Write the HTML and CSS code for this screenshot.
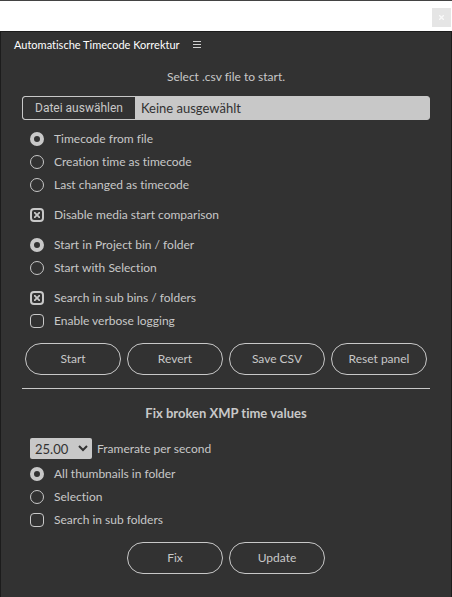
FILE: index.html
```
<!DOCTYPE html>
<html lang="de">
<head>
<meta charset="utf-8">
<title>Automatische Timecode Korrektur</title>
<link rel="stylesheet" href="styles.css">
</head>
<body>
<div class="titlebar">
  <button class="close" type="button" aria-label="Close"><svg width="5" height="5" viewBox="0 0 5 5"><path d="M0 0L5 5M5 0L0 5"/></svg></button>
</div>
<main class="panel">
  <header class="head">
    <h1 class="title">Automatische Timecode Korrektur</h1>
    <button class="menu" type="button" aria-label="Panel menu"><svg width="8" height="7" viewBox="0 0 8 7"><path d="M0 .5H8M0 3.5H8M0 6.5H8"/></svg></button>
  </header>
  <form class="content">
    <p class="hint">Select .csv file to start.</p>
    <label class="file">
      <input class="file-input" type="file" accept=".csv">
      <span class="file-button">Datei auswählen</span>
      <span class="file-name">Keine ausgewählt</span>
    </label>
    <div class="group">
      <label class="option"><input type="radio" name="source" checked>Timecode from file</label>
      <label class="option"><input type="radio" name="source">Creation time as timecode</label>
      <label class="option"><input type="radio" name="source">Last changed as timecode</label>
    </div>
    <div class="group">
      <label class="option"><input type="checkbox" checked>Disable media start comparison</label>
    </div>
    <div class="group">
      <label class="option"><input type="radio" name="start" checked>Start in Project bin / folder</label>
      <label class="option"><input type="radio" name="start">Start with Selection</label>
    </div>
    <div class="group">
      <label class="option"><input type="checkbox" checked>Search in sub bins / folders</label>
      <label class="option"><input type="checkbox">Enable verbose logging</label>
    </div>
    <div class="actions">
      <button class="pill" type="button">Start</button>
      <button class="pill" type="button">Revert</button>
      <button class="pill" type="button">Save CSV</button>
      <button class="pill" type="button">Reset panel</button>
    </div>
    <hr class="rule">
    <h2 class="subtitle">Fix broken XMP time values</h2>
    <div class="rate">
      <span class="select-wrap">
        <select class="select" id="rate"><option>25.00</option></select>
        <svg class="chevron" width="10" height="7" viewBox="0 0 10 7"><path d="M1 1L5 5L9 1"/></svg>
      </span>
      <label for="rate">Framerate per second</label>
    </div>
    <div class="group">
      <label class="option"><input type="radio" name="scope" checked>All thumbnails in folder</label>
      <label class="option"><input type="radio" name="scope">Selection</label>
      <label class="option"><input type="checkbox">Search in sub folders</label>
    </div>
    <div class="actions">
      <button class="pill" type="button">Fix</button>
      <button class="pill" type="button">Update</button>
    </div>
  </form>
</main>
</body>
</html>
```
FILE: styles.css
```
* {
  box-sizing: border-box;
}

body {
  margin: 0;
  min-height: 100vh;
  display: flex;
  flex-direction: column;
  background: #323232;
  color: #c8c8c8;
  font: 12px/16px Lato, "Noto Sans", sans-serif;
  font-variant-ligatures: none;
}

button,
select {
  font: inherit;
  color: inherit;
}

.titlebar {
  display: flex;
  justify-content: flex-end;
  height: 31px;
  padding: 7px 1px 0 0;
  background: #fff;
  border-top: 1px solid #434343;
}

.close {
  display: grid;
  place-items: center;
  width: 19px;
  height: 19px;
  padding: 0;
  border: 0;
  background: #e5e5e5;
}

.close svg {
  fill: none;
  stroke: #f8f8f8;
  stroke-width: 1.4;
}

.panel {
  flex: 1;
  border: 1px solid #1c1c1c;
  border-bottom: 0;
}

.head {
  display: flex;
  align-items: center;
  gap: 13px;
  height: 25px;
  padding-left: 13px;
}

.title {
  margin: 0;
  color: #fff;
  font-size: 11px;
  font-weight: 400;
}

.menu {
  display: flex;
  padding: 0;
  border: 0;
  background: none;
}

.menu svg {
  fill: none;
  stroke: #d0d0d0;
}

.content {
  display: flex;
  flex-direction: column;
  padding: 12px 21px;
}

.hint {
  margin: 0 0 11px;
  text-align: center;
}

.file {
  position: relative;
  display: flex;
  height: 24px;
  margin-bottom: 7px;
  border: 1px solid #c8c8c8;
  border-radius: 3px;
  background: #c8c8c8;
  line-height: 22px;
  overflow: hidden;
}

.file-input {
  position: absolute;
  inset: 0;
  width: 100%;
  opacity: 0;
}

.file-button {
  padding: 0 12px;
  border-radius: 2px 0 0 2px;
  background: #323232;
  font-family: Roboto, "Liberation Sans", sans-serif;
  font-size: 12px;
}

.file-name {
  padding-left: 6px;
  color: #323232;
  font-size: 13px;
}

.group {
  display: flex;
  flex-direction: column;
  align-items: flex-start;
  margin: 0 8px 7px;
}

.option {
  display: flex;
  align-items: center;
  gap: 10px;
  height: 23px;
}

.option input {
  appearance: none;
  display: grid;
  place-items: center;
  width: 14px;
  height: 14px;
  margin: 0;
  border: 1px solid #c8c8c8;
  border-radius: 4px;
}

.option input[type="radio"] {
  border-radius: 50%;
}

.option input[type="radio"]:checked {
  border-width: 4px;
}

.option input[type="checkbox"]:checked {
  border-width: 2px;
}

.option input[type="checkbox"]:checked::before {
  content: "";
  width: 6px;
  height: 6px;
  background:
    linear-gradient(45deg, transparent 36%, #c8c8c8 44%, #c8c8c8 56%, transparent 64%),
    linear-gradient(-45deg, transparent 36%, #c8c8c8 44%, #c8c8c8 56%, transparent 64%);
}

.actions {
  display: flex;
  justify-content: center;
  gap: 6px;
  margin-top: 4px;
}

.pill {
  width: 96px;
  height: 32px;
  padding: 0;
  border: 1px solid #c8c8c8;
  border-radius: 16px;
  background: none;
}

.rule {
  width: 100%;
  height: 1px;
  margin: 13px 0 16px;
  border: 0;
  background: #c8c8c8;
}

.subtitle {
  margin: 0 0 17px;
  font-size: 13px;
  text-align: center;
}

.rate {
  display: flex;
  align-items: center;
  gap: 5px;
  margin: 0 8px 3px;
}

.select-wrap {
  position: relative;
  display: flex;
}

.select {
  appearance: none;
  width: 62px;
  height: 21px;
  padding: 0 5px;
  border: 0;
  border-radius: 2px;
  background: #c8c8c8;
  color: #323232;
  font-size: 13px;
}

.chevron {
  position: absolute;
  top: 7px;
  right: 4px;
  fill: none;
  stroke: #323232;
  stroke-width: 2;
  pointer-events: none;
}
```
